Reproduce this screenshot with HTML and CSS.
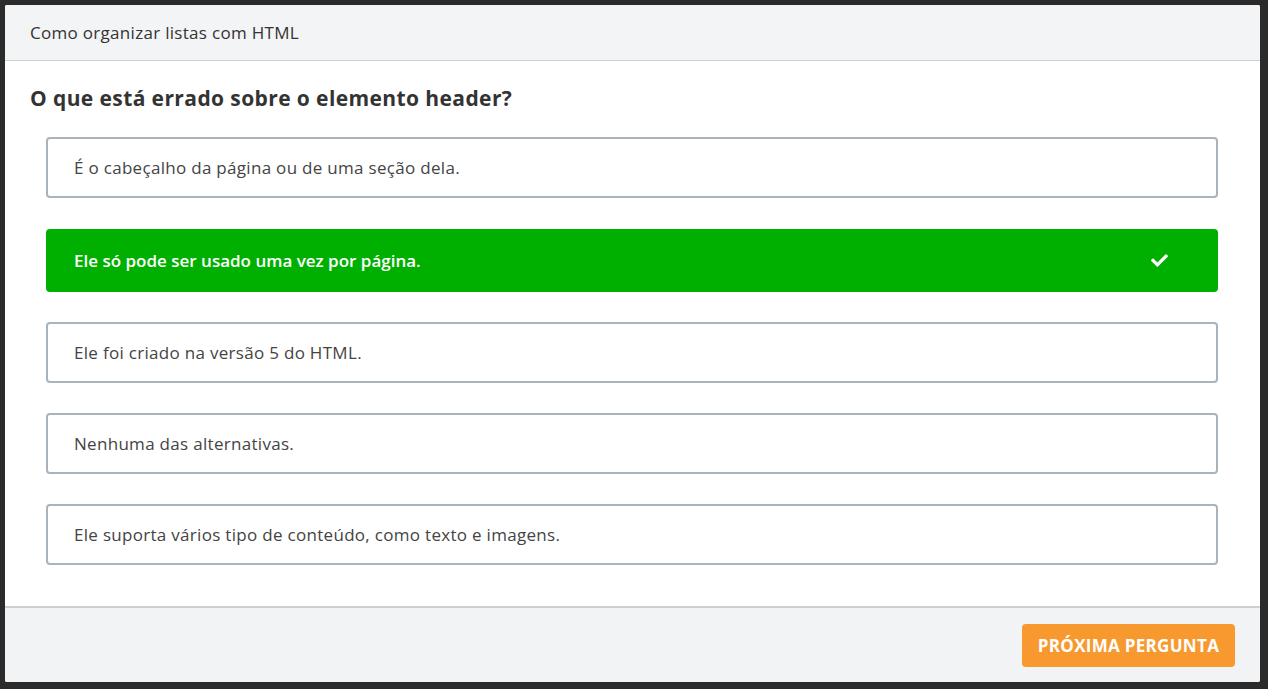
FILE: index.html
```html
<!DOCTYPE html>
<html lang="pt-BR">
<head>
<meta charset="utf-8">
<title>Quiz</title>
<link rel="stylesheet" href="styles.css">
</head>
<body>
<div class="card">
  <header class="card-header">Como organizar listas com HTML</header>
  <main class="card-body">
    <h1 class="question">O que está errado sobre o elemento header?</h1>
    <ul class="options">
      <li class="option">É o cabeçalho da página ou de uma seção dela.</li>
      <li class="option option-correct">Ele só pode ser usado uma vez por página.
        <svg class="check" viewBox="0 0 512 512" width="17" height="17"><path fill="#fff" d="M173.9 439.4l-166.4-166.4c-10-10-10-26.2 0-36.2l36.2-36.2c10-10 26.2-10 36.2 0L192 312.7 432.1 72.6c10-10 26.2-10 36.2 0l36.2 36.2c10 10 10 26.2 0 36.2L210.1 439.4c-10 10-26.2 10-36.2 0z"/></svg>
      </li>
      <li class="option">Ele foi criado na versão 5 do HTML.</li>
      <li class="option">Nenhuma das alternativas.</li>
      <li class="option">Ele suporta vários tipo de conteúdo, como texto e imagens.</li>
    </ul>
  </main>
  <footer class="card-footer">
    <button class="next-btn">PRÓXIMA PERGUNTA</button>
  </footer>
</div>
</body>
</html>
```
FILE: styles.css
```css
* { box-sizing: border-box; }
html, body { margin: 0; height: 100%; }
body {
  background: #2b2b2b;
  padding: 5px 8px 7px 5px;
  font-family: "Open Sans", "Noto Sans", sans-serif;
  color: #333;
}
.card {
  background: #fff;
  height: 677px;
  display: flex;
  flex-direction: column;
  border-radius: 2px;
  overflow: hidden;
}
.card-header {
  height: 56px;
  flex: none;
  background: #f3f4f5;
  border-bottom: 1px solid #cfd1d3;
  display: flex;
  align-items: center;
  padding: 0 25px;
  font-size: 17px;
  letter-spacing: 0.3px;
  color: #333;
}
.card-body {
  flex: 1;
  padding: 23px 42px 0 41px;
}
.question {
  margin: 0 0 25px -16px;
  font-size: 21px;
  line-height: 28px;
  letter-spacing: 0.4px;
  font-weight: 700;
  color: #333;
}
.options {
  list-style: none;
  margin: 0;
  padding: 0;
  display: flex;
  flex-direction: column;
  gap: 30px;
}
.option {
  height: 61px;
  border: 2px solid #a9b3bb;
  border-radius: 4px;
  display: flex;
  align-items: center;
  padding: 0 26px;
  font-size: 17px;
  letter-spacing: 0.3px;
  color: #444;
}
.option:first-child { margin-bottom: 1px; }
.option-correct {
  height: 63px;
  background: #00b000;
  border-color: #00b000;
  color: #fff;
  font-weight: 600;
  letter-spacing: 0;
  justify-content: space-between;
  padding-right: 48px;
}
.check { display: block; }
.card-footer {
  flex: none;
  height: 76px;
  background: #f2f3f4;
  border-top: 2px solid #cdcfd1;
  display: flex;
  align-items: center;
  justify-content: flex-end;
  padding: 0 25px 0 0;
}
.next-btn {
  height: 43px;
  width: 213px;
  background: #f7992f;
  border: none;
  border-radius: 4px;
  color: #fff;
  font-family: "Open Sans", "Noto Sans", sans-serif;
  font-weight: 700;
  font-size: 17px;
  letter-spacing: 0.3px;
  padding: 0;
}
```
